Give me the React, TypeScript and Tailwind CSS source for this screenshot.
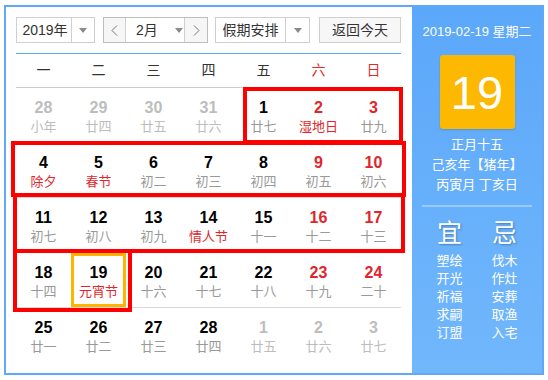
import React from "react";

type Cell = { d: number; l: string; other?: boolean; red?: boolean; lred?: boolean };

const ROWS: Cell[][] = [
  [
    { d: 28, l: "小年", other: true },
    { d: 29, l: "廿四", other: true },
    { d: 30, l: "廿五", other: true },
    { d: 31, l: "廿六", other: true },
    { d: 1, l: "廿七" },
    { d: 2, l: "湿地日", red: true, lred: true },
    { d: 3, l: "廿九", red: true },
  ],
  [
    { d: 4, l: "除夕", lred: true },
    { d: 5, l: "春节", lred: true },
    { d: 6, l: "初二" },
    { d: 7, l: "初三" },
    { d: 8, l: "初四" },
    { d: 9, l: "初五", red: true },
    { d: 10, l: "初六", red: true },
  ],
  [
    { d: 11, l: "初七" },
    { d: 12, l: "初八" },
    { d: 13, l: "初九" },
    { d: 14, l: "情人节", lred: true },
    { d: 15, l: "十一" },
    { d: 16, l: "十二", red: true },
    { d: 17, l: "十三", red: true },
  ],
  [
    { d: 18, l: "十四" },
    { d: 19, l: "元宵节", lred: true },
    { d: 20, l: "十六" },
    { d: 21, l: "十七" },
    { d: 22, l: "十八" },
    { d: 23, l: "十九", red: true },
    { d: 24, l: "二十", red: true },
  ],
  [
    { d: 25, l: "廿一" },
    { d: 26, l: "廿二" },
    { d: 27, l: "廿三" },
    { d: 28, l: "廿四" },
    { d: 1, l: "廿五", other: true },
    { d: 2, l: "廿六", other: true },
    { d: 3, l: "廿七", other: true },
  ],
];

const WEEK = ["一", "二", "三", "四", "五", "六", "日"];
const YI = ["塑绘", "开光", "祈福", "求嗣", "订盟"];
const JI = ["伐木", "作灶", "安葬", "取渔", "入宅"];

function Caret() {
  return (
    <svg width="8" height="5" viewBox="0 0 8 5">
      <path d="M0 0h8L4 5z" fill="#8a8a8a" />
    </svg>
  );
}

function Chevron({ right = false }: { right?: boolean }) {
  return (
    <svg width="7" height="11" viewBox="0 0 7 11">
      <path d={right ? "M1 0.5l5 5-5 5" : "M6 0.5l-5 5 5 5"} stroke="#777" strokeWidth="1" fill="none" />
    </svg>
  );
}

export default function App() {
  return (
    <div className="relative w-[548px] h-[380px] bg-white pl-[4px] pt-[5px] font-['Liberation_Sans','Noto_Sans_CJK_SC',sans-serif]">
      <div className="flex w-[540px] h-[370px] border-2 border-[#5fa9f8]">
        {/* calendar */}
        <div className="w-[406px] pl-[10px] pt-[10px]">
          <div className="flex h-[26px] text-[14px] text-[#333]">
            <div className="flex w-[79px] border border-[#cfcfcf]">
              <div className="flex-1 flex items-center justify-center pl-[2px]">2019年</div>
              <div className="w-[23px] border-l border-[#cfcfcf] flex items-center justify-center">
                <Caret />
              </div>
            </div>
            <div className="flex w-[105px] ml-[8px] border border-[#bdbdbd]">
              <div className="w-[22px] bg-[#f6f6f6] border-r border-[#cfcfcf] flex items-center justify-center">
                <Chevron />
              </div>
              <div className="flex-1 flex items-center pl-[10px] gap-[17px]">
                <span>2月</span>
                <Caret />
              </div>
              <div className="w-[23px] bg-[#f6f6f6] border-l border-[#cfcfcf] flex items-center justify-center">
                <Chevron right />
              </div>
            </div>
            <div className="flex w-[95px] ml-[7px] border border-[#cfcfcf]">
              <div className="flex-1 flex items-center justify-center">假期安排</div>
              <div className="w-[24px] border-l border-[#cfcfcf] flex items-center justify-center">
                <Caret />
              </div>
            </div>
            <div className="w-[82px] ml-[9px] border border-[#cfcfcf] bg-[#f7f7f7] flex items-center justify-center">
              返回今天
            </div>
          </div>

          <div className="w-[385px] mt-[10px] h-px bg-[#5fa9f8]" />

          <div className="grid grid-cols-7 w-[385px] h-[34px] border-b border-[#cccccc] text-[14px] text-[#333]">
            {WEEK.map((w, i) => (
              <div key={w} className={`flex items-center justify-center ${i > 4 ? "text-[#e32b2b]" : ""}`}>
                {w}
              </div>
            ))}
          </div>

          {ROWS.map((row, r) => (
            <div
              key={r}
              className={`grid grid-cols-7 w-[385px] h-[55px] ${r < 4 ? "border-b border-[#d8d8d8]" : ""}`}
            >
              {row.map((c, i) => (
                <div key={i} className="flex flex-col items-center pt-[11px]">
                  <div
                    className={`text-[16px] font-bold leading-[18px] ${
                      c.other ? "text-[#bdbdbd]" : c.red ? "text-[#e0262c]" : "text-black"
                    }`}
                  >
                    {c.d}
                  </div>
                  <div
                    className={`mt-[2px] text-[13px] leading-[16px] ${
                      c.other ? "text-[#bdbdbd]" : c.lred ? "text-[#e0262c]" : "text-[#999]"
                    }`}
                  >
                    {c.l}
                  </div>
                </div>
              ))}
            </div>
          ))}
        </div>

        {/* side panel */}
        <div className="w-[130px] h-full bg-linear-to-b from-[#5ba7f9] to-[#71b7fc] text-white flex flex-col items-center">
          <div className="mt-[15px] text-[13px] leading-[20px]">2019-02-19 星期二</div>
          <div className="mt-[13px] w-[75px] h-[74px] rounded-[3px] bg-[#fdb901] shadow-[0_1px_2px_rgba(0,0,0,0.15)] flex items-center justify-center text-[47px] leading-none">
            19
          </div>
          <div className="mt-[6px] text-[13px] leading-[20px] text-center">
            <div>正月十五</div>
            <div>己亥年【猪年】</div>
            <div>丙寅月 丁亥日</div>
          </div>
          <div className="mt-[10px] w-[110px] h-[2px] bg-[#9ccafc]" />
          <div className="mt-[11px] flex gap-[5px]">
            {[
              ["宜", YI],
              ["忌", JI],
            ].map(([t, list]) => (
              <div key={t as string} className="w-[50px] flex flex-col items-center">
                <div className="text-[25px] leading-[30px] [text-shadow:1px_1px_2px_rgba(0,0,0,0.3)]">
                  {t as string}
                </div>
                <div className="mt-[4px] text-[13px] leading-[18px] text-center">
                  {(list as string[]).map((x) => (
                    <div key={x}>{x}</div>
                  ))}
                </div>
              </div>
            ))}
          </div>
        </div>
      </div>

      {/* annotation boxes */}
      <div className="absolute left-[243px] top-[87px] w-[160px] h-[57px] border-4 border-[#ff0000] pointer-events-none" />
      <div className="absolute left-[11px] top-[141px] w-[395px] h-[56px] border-4 border-[#ff0000] pointer-events-none" />
      <div className="absolute left-[13px] top-[193px] w-[392px] h-[60px] border-4 border-[#ff0000] pointer-events-none" />
      <div className="absolute left-[13px] top-[249px] w-[119px] h-[63px] border-4 border-[#ff0000] pointer-events-none" />
      <div className="absolute left-[71px] top-[253px] w-[55px] h-[54px] border-[3px] border-[#ffb400] pointer-events-none" />
    </div>
  );
}
